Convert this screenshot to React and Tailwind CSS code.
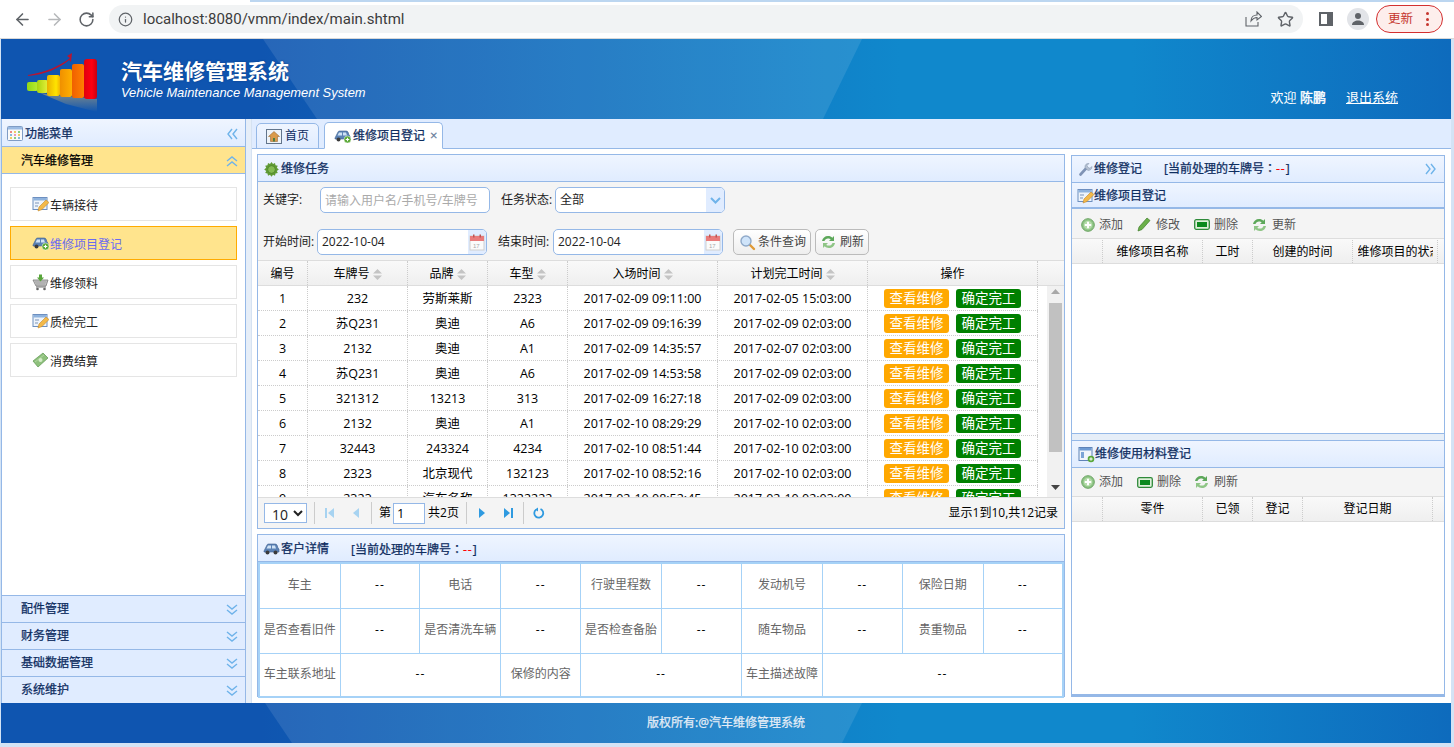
import React from "react";
import { ArrowLeft, ArrowRight, RotateCw, Info, Star } from "lucide-react";

const Dbl = ({ dir = "down", className = "" }) => {
  const d = {
    down: "M2 3l5 4 5-4M2 8l5 4 5-4",
    up: "M2 7l5-4 5 4M2 12l5-4 5 4",
    left: "M7 2L3 7l4 5M12 2L8 7l4 5",
    right: "M2 2l4 5-4 5M7 2l4 5-4 5",
  }[dir];
  return (
    <svg width="14" height="14" viewBox="0 0 14 14" className={className}>
      <path d={d} fill="none" stroke="#6fb3ea" strokeWidth="1.4" />
    </svg>
  );
};

const CarIcon = ({ plus = true }) => (
  <svg width="18" height="16" viewBox="0 0 18 16" className="shrink-0">
    <path d="M1 10l1-2 2-4c.5-1 1-1 2-1h6c1 0 1.500.3 2 1l1 3 1 1v3H1z" fill="#5b82b5" stroke="#3f5f8d" strokeWidth=".6" />
    <path d="M5 4.500h3v3H3.500zM9 4.500h3l1 3H9z" fill="#cfe2f5" />
    <circle cx="4.500" cy="11.500" r="2" fill="#3b3b3b" />
    <circle cx="12.500" cy="11.500" r="2" fill="#3b3b3b" />
    {plus && <circle cx="13.500" cy="11.500" r="3.500" fill="#55a630" stroke="#fff" strokeWidth=".5" />}
    {plus && <path d="M11.700 11.500h3.600M13.500 9.700v3.600" stroke="#fff" strokeWidth="1.200" />}
  </svg>
);

const FormPen = () => (
  <svg width="17" height="16" viewBox="0 0 17 16" className="shrink-0">
    <rect x="1" y="1.500" width="14" height="12" fill="#eef4fb" stroke="#6d8fc0" />
    <rect x="1.500" y="2" width="13" height="2.500" fill="#8fb3de" />
    <path d="M3 7h4M3 10h3" stroke="#7a93b8" />
    <path d="M6 15l1-4 7-7 3 2.500-7 7z" fill="#f3b94a" stroke="#c58a2a" strokeWidth=".6" />
  </svg>
);

const Cart = () => (
  <svg width="17" height="17" viewBox="0 0 17 17" className="shrink-0">
    <path d="M1 6h15l-2 6H4z" fill="#c9c9c9" stroke="#777" strokeWidth=".8" />
    <path d="M3 8h11.500M4 10h9.500" stroke="#888" strokeWidth=".7" />
    <path d="M4 13h10" stroke="#777" />
    <circle cx="5.500" cy="15" r="1.300" fill="#666" />
    <circle cx="12.500" cy="15" r="1.300" fill="#666" />
    <path d="M7 .5h3v3h2L8.500 7.500 5 3.500h2z" fill="#58a53a" />
  </svg>
);

const Money = () => (
  <svg width="17" height="16" viewBox="0 0 17 16" className="shrink-0">
    <path d="M1 9L11 1l5 5-10 9z" fill="#8ec07c" stroke="#5d9650" strokeWidth=".7" />
    <circle cx="8.500" cy="8" r="2" fill="#d5ecc9" />
    <path d="M3 10L12 3" stroke="#c5e3b7" strokeWidth=".6" />
  </svg>
);

const Home = () => (
  <svg width="16" height="15" viewBox="0 0 16 15" className="shrink-0">
    <rect x=".5" y=".5" width="15" height="14" fill="#eef3f8" stroke="#62758c" />
    <path d="M8 2.500L2.500 7.500h2v5h7v-5h2z" fill="#d99a4a" stroke="#8e5c25" strokeWidth=".5" />
    <rect x="7" y="9" width="2" height="3.500" fill="#4f7e3f" />
  </svg>
);

const Bug = () => (
  <svg width="17" height="17" viewBox="0 0 17 17" className="shrink-0">
    <path d="M8.500 1l1.500 2 2-1 .5 2.300 2.300.5-1 2 2 1.700-2 1.500 1 2-2.300.5-.5 2.300-2-1-1.500 2-1.500-2-2 1-.5-2.300-2.300-.5 1-2-2-1.500 2-1.700-1-2 2.300-.5.500-2.300 2 1z" fill="#5f9a34" />
    <ellipse cx="8.500" cy="8.500" rx="3.800" ry="3.800" fill="#84bb52" stroke="#3f7722" strokeWidth=".6" />
  </svg>
);

const Wrench = () => (
  <svg width="14" height="14" viewBox="0 0 14 14" className="shrink-0">
    <path d="M1.500 12.500l5.500-6" stroke="#7f93b5" strokeWidth="2.600" strokeLinecap="round" />
    <path d="M6 5.500c-.5-2.500 1.500-4.500 4-4l-2 2 1 2 2 .8 1.800-1.800c.4 2.500-2 4.500-4.300 3.700z" fill="#b6c2d3" stroke="#7f8ea6" strokeWidth=".5" />
  </svg>
);

const FormAdd = () => (
  <svg width="17" height="17" viewBox="0 0 17 17" className="shrink-0">
    <rect x="1" y="1.500" width="13" height="13" fill="#f0f5fb" stroke="#5f83b8" />
    <rect x="1.500" y="2" width="12" height="2.500" fill="#6e9bd4" />
    <rect x="3" y="6" width="3" height="6" fill="#7ba4d6" />
    <circle cx="13" cy="13" r="3.300" fill="#5aa83c" />
    <path d="M11.300 13h3.400M13 11.300v3.400" stroke="#fff" />
  </svg>
);

const Grid = () => (
  <svg width="16" height="15" viewBox="0 0 16 15" className="shrink-0">
    <rect x=".5" y=".5" width="15" height="14" rx="1" fill="#fafafa" stroke="#7f9cc5" />
    <rect x="1" y="1" width="14" height="2.500" fill="#9cbce4" />
    <path d="M3 5h2v2H3z" fill="#e88" /><path d="M7 5h2v2H7z" fill="#ec6" /><path d="M11 5h2v2h-2z" fill="#8c8" />
    <path d="M3 8h2v2H3z" fill="#8bd" /><path d="M7 8h2v2H7z" fill="#e9b" /><path d="M11 8h2v2h-2z" fill="#ec6" />
    <path d="M3 11h2v2H3z" fill="#ec6" /><path d="M7 11h2v2H7z" fill="#8c8" /><path d="M11 11h2v2h-2z" fill="#8bd" />
  </svg>
);

const Calendar = () => (
  <svg width="16" height="17" viewBox="0 0 16 17">
    <rect x="1" y="2" width="14" height="14" fill="#fbfbfb" stroke="#cfcfcf" />
    <rect x="1" y="2" width="14" height="5" fill="#e97a7a" />
    <rect x="4" y=".5" width="1.500" height="3" fill="#b55" />
    <rect x="10.500" y=".5" width="1.500" height="3" fill="#b55" />
    <text x="4" y="14" fontSize="6" fill="#aaa" fontFamily="Liberation Sans">17</text>
  </svg>
);

const Search = () => (
  <svg width="17" height="17" viewBox="0 0 17 17" className="shrink-0">
    <path d="M10 10l5 5" stroke="#e09a35" strokeWidth="2.400" strokeLinecap="round" />
    <circle cx="7" cy="7" r="5" fill="#cfe4fa" stroke="#8fa9c9" strokeWidth="1.400" />
  </svg>
);

const Refresh = () => (
  <svg width="17" height="16" viewBox="0 0 17 16" className="shrink-0">
    <path d="M2 7c.5-3 3-5 6-5 2 0 3.300.7 4.300 1.700L14 2v5H9l1.700-1.700C10 4.600 9.200 4.400 8 4.400 6.300 4.400 5 5.400 4.500 7z" fill="#5da85a" />
    <path d="M15 9c-.5 3-3 5-6 5-2 0-3.300-.7-4.300-1.700L3 14V9h5l-1.700 1.700c.7.7 1.500.9 2.700.9 1.700 0 3-1 3.500-2.600z" fill="#8fc586" />
  </svg>
);

const AddIcon = () => (
  <svg width="14" height="14" viewBox="0 0 14 14" className="shrink-0">
    <circle cx="7" cy="7" r="6.300" fill="#8fc586" stroke="#6ba362" />
    <circle cx="7" cy="7" r="4.300" fill="#b5dcaa" />
    <path d="M3.800 7h6.400M7 3.800v6.400" stroke="#fff" strokeWidth="2" />
  </svg>
);

const Pencil = () => (
  <svg width="15" height="15" viewBox="0 0 15 15" className="shrink-0">
    <path d="M1 14l1-4 8-9 3 2.500-8 9z" fill="#6bb04a" stroke="#3f7d2a" strokeWidth=".7" />
  </svg>
);

const Minus = () => (
  <svg width="16" height="11" viewBox="0 0 16 11" className="shrink-0">
    <rect x=".7" y=".7" width="14.600" height="9.600" rx="1.500" fill="#dff0da" stroke="#2f8a3a" strokeWidth="1.300" />
    <rect x="3" y="3" width="10" height="5" fill="#0b8a1e" />
  </svg>
);

const Logo = () => (
  <svg width="72" height="62" viewBox="0 0 72 62" className="shrink-0">
    <defs>
      <linearGradient id="b1" x1="0" x2="1"><stop offset="0" stopColor="#8fd816" /><stop offset="1" stopColor="#b8ec30" /></linearGradient>
      <linearGradient id="b2" x1="0" x2="1"><stop offset="0" stopColor="#a8d410" /><stop offset="1" stopColor="#e6f03a" /></linearGradient>
      <linearGradient id="b3" x1="0" x2="1"><stop offset="0" stopColor="#e8b000" /><stop offset=".7" stopColor="#ffe400" /><stop offset="1" stopColor="#f4b400" /></linearGradient>
      <linearGradient id="b4" x1="0" x2="1"><stop offset="0" stopColor="#f09000" /><stop offset="1" stopColor="#ffb000" /></linearGradient>
      <linearGradient id="b5" x1="0" x2="1"><stop offset="0" stopColor="#f06000" /><stop offset="1" stopColor="#ff8000" /></linearGradient>
      <linearGradient id="b6" x1="0" x2="1"><stop offset="0" stopColor="#e00010" /><stop offset=".6" stopColor="#ff0010" /><stop offset="1" stopColor="#c80010" /></linearGradient>
      <linearGradient id="rf" x1="0" x2="0" y1="0" y2="1"><stop offset="0" stopColor="#ffc860" stopOpacity=".45" /><stop offset="1" stopColor="#ffc860" stopOpacity="0" /></linearGradient>
    </defs>
    <path d="M2 23C20 20 34 14 44 6l-3-2 5-3-1 9-2-2C34 16 18 23 2 24z" fill="#b81530" />
    <path d="M14 41l20 3 24 2 13 1v13L40 52z" fill="url(#rf)" />
    <rect x="1" y="30" width="11" height="9" rx="2" fill="url(#b1)" />
    <rect x="11" y="28" width="11" height="13" rx="2" fill="url(#b2)" />
    <rect x="21" y="23" width="13" height="21" rx="2" fill="url(#b3)" />
    <rect x="34" y="17" width="12" height="28" rx="2" fill="url(#b4)" />
    <rect x="46" y="12" width="12" height="34" rx="2" fill="url(#b5)" />
    <rect x="58" y="7" width="13" height="40" rx="3" fill="url(#b6)" />
  </svg>
);

const PagerIcon = ({ d, color = "#2f9ae0" }) => (
  <svg width="12" height="14" viewBox="0 0 12 14" className="shrink-0">
    <path d={d} fill={color} />
  </svg>
);

const Panel = ({ children, className = "" }) => (
  <div className={`h-[27px] shrink-0 flex items-center bg-[linear-gradient(180deg,#eff5ff,#e0ecff)] border-b border-[#95b8e7] text-[#0e2d5f] [-webkit-text-stroke:0.25px] ${className}`}>
    {children}
  </div>
);

const SortArrows = () => (
  <svg width="9" height="11" viewBox="0 0 9 11" className="ml-[3px] shrink-0">
    <path d="M4.500 0L9 4.500H0zM4.500 11L0 6.500h9z" fill="#c4c4c4" />
  </svg>
);

const columns = [
  ["编号", "w-[50px]", false],
  ["车牌号", "w-[100px]", true],
  ["品牌", "w-[80px]", true],
  ["车型", "w-[80px]", true],
  ["入场时间", "w-[150px]", true],
  ["计划完工时间", "w-[150px]", true],
  ["操作", "w-[170px]", false],
];

const rows = [
  ["1", "232", "劳斯莱斯", "2323", "2017-02-09 09:11:00", "2017-02-05 15:03:00"],
  ["2", "苏Q231", "奥迪", "A6", "2017-02-09 09:16:39", "2017-02-09 02:03:00"],
  ["3", "2132", "奥迪", "A1", "2017-02-09 14:35:57", "2017-02-07 02:03:00"],
  ["4", "苏Q231", "奥迪", "A6", "2017-02-09 14:53:58", "2017-02-09 02:03:00"],
  ["5", "321312", "13213", "313", "2017-02-09 16:27:18", "2017-02-09 02:03:00"],
  ["6", "2132", "奥迪", "A1", "2017-02-10 08:29:29", "2017-02-10 02:03:00"],
  ["7", "32443", "243324", "4234", "2017-02-10 08:51:44", "2017-02-10 02:03:00"],
  ["8", "2323", "北京现代", "132123", "2017-02-10 08:52:16", "2017-02-10 02:03:00"],
  ["9", "2323", "汽车名称", "1322222", "2017-02-10 08:52:45", "2017-02-10 02:03:00"],
];

const menu = [
  ["车辆接待", <FormPen />],
  ["维修项目登记", <CarIcon />, true],
  ["维修领料", <Cart />],
  ["质检完工", <FormPen />],
  ["消费结算", <Money />],
];

const GridHeader = ({ cols, textPad = "" }) => (
  <div className={`h-[26px] shrink-0 flex bg-[linear-gradient(180deg,#f9f9f9,#efefef)] border-y border-[#dddddd] text-[#000] ${textPad}`}>
    {cols.map(([t, w, clip], i) => (
      <div key={i} className={`${w} shrink-0 flex items-center justify-center overflow-hidden whitespace-nowrap border-r border-dotted border-[#cccccc]`}>
        {clip ? <span className="w-[75px] overflow-hidden">{t}</span> : t}
      </div>
    ))}
  </div>
);

const Tool = ({ icon, label, className = "" }) => (
  <div className={`flex items-center gap-[4px] text-[#555] ${className}`}>{icon}<span>{label}</span></div>
);

const Label = ({ children }) => <td className="w-[81px] pb-[2px] border border-[#a6d2f7] text-center text-[#666]">{children}</td>;
const Val = ({ span = 1 }) => <td colSpan={span} className="pb-[2px] border border-[#a6d2f7] text-center text-black tracking-[1px]">--</td>;

const Plate = () => (
  <span className="ml-[22px]">[当前处理的车牌号<span className="font-['Noto_Sans_CJK_TC',sans-serif]">：</span><span className="text-[#ff0000] tracking-[1px]">--</span>]</span>
);

const headerBg = "bg-[linear-gradient(90deg,#0f55b0_0%,#0f55b0_18%,#1088cc_62%,#1088cc_78%,#0e6bbd_100%)]";

export default function App() {
  return (
    <div className="relative w-[1454px] h-[747px] overflow-hidden bg-[#d3e3f5] text-[12px] text-[#222] font-['Open_Sans','Noto_Sans_CJK_SC',sans-serif]">
      {/* browser chrome */}
      <div className="relative h-[39px] bg-white flex items-center border-b border-[#d8d8d8]">
        <div className="absolute left-[250px] right-0 top-0 h-[2px] bg-[#bcd6f0]" />
        <ArrowLeft size={19} color="#5f6368" strokeWidth={2} className="ml-[13px]" />
        <ArrowRight size={19} color="#b6b8ba" strokeWidth={2} className="ml-[13px]" />
        <RotateCw size={17} color="#5f6368" strokeWidth={2.200} className="ml-[14px]" />
        <div className="ml-[14px] w-[1194px] h-[28px] rounded-full bg-[#f1f3f4] flex items-center">
          <Info size={15} color="#5f6368" strokeWidth={2} className="ml-[9px]" />
          <span className="ml-[10px] text-[15px] text-[#3c3c3c] font-['Roboto',sans-serif]">localhost:8080/vmm/index/main.shtml</span>
          <div className="ml-auto flex items-center mr-[9px] gap-[15px]">
            <svg width="17" height="16" viewBox="0 0 17 16"><path d="M1 6v9h12v-4M6 10c0-4 3-6 6-6V1l4.500 4.500L12 9V6.500C9.500 6.500 7.500 8 6 10z" fill="none" stroke="#5f6368" strokeWidth="1.100" /></svg>
            <Star size={17} color="#5f6368" strokeWidth={2} />
          </div>
        </div>
        <div className="ml-[16px] w-[14px] h-[14px] border-2 border-[#5f6368] border-r-[6px]" />
        <div className="ml-[14px] w-[22px] h-[22px] rounded-full bg-[#e2e4e8] flex items-center justify-center">
          <svg width="14" height="14" viewBox="0 0 14 14"><circle cx="7" cy="4" r="3" fill="#5f6368" /><path d="M1 13c0-3 3-4.500 6-4.500s6 1.500 6 4.500z" fill="#5f6368" /></svg>
        </div>
        <div className="ml-[7px] w-[67px] h-[28px] rounded-full border border-[#d32f2f] bg-[#fdeeec] flex items-center text-[#c5352e] text-[12.500px] pl-[11px]">
          更新
          <span className="ml-[13px] flex flex-col gap-[2.500px]">
            <span className="w-[3px] h-[3px] rounded-full bg-[#c5352e]" />
            <span className="w-[3px] h-[3px] rounded-full bg-[#c5352e]" />
            <span className="w-[3px] h-[3px] rounded-full bg-[#c5352e]" />
          </span>
        </div>
      </div>

      {/* app */}
      <div className="ml-px w-[1450px] bg-white">
        <div className={`relative h-[80px] flex ${headerBg}`}>
          <div className="absolute inset-0 bg-white/10 [clip-path:polygon(262px_0,861px_0,822px_100%,316px_100%)]" />
          <div className="relative flex w-full">
            <div className="ml-[25px] mt-[13px]"><Logo /></div>
            <div className="ml-[23px] mt-[18px] text-white">
              <div className="text-[21px] leading-[28px] font-bold [text-shadow:0_0_2px_#0a3a80]">汽车维修管理系统</div>
              <div className="text-[12.900px] leading-[16px] italic whitespace-nowrap font-['Liberation_Sans',sans-serif]">Vehicle Maintenance Management System</div>
            </div>
            <div className="ml-auto mr-[53px] mt-[49px] flex text-white text-[13px] leading-[18px]">
              <span>欢迎 <span className="[-webkit-text-stroke:0.4px]">陈鹏</span></span>
              <span className="ml-[20px] underline">退出系统</span>
            </div>
          </div>
        </div>

        <div className="h-[584px] flex">
          {/* sidebar */}
          <div className="w-[245px] shrink-0 border-x border-[#95b8e7] flex flex-col bg-white">
            <div className="h-[28px] shrink-0 flex items-center pl-[5px] pr-[6px] pt-[2px] bg-[linear-gradient(180deg,#eff5ff,#e0ecff)] border-b border-[#95b8e7] text-[#0e2d5f] [-webkit-text-stroke:0.25px]">
              <Grid /><span className="ml-[2px]">功能菜单</span><Dbl dir="left" className="ml-auto" />
            </div>
            <div className="h-[27px] shrink-0 flex items-center pl-[19px] pr-[6px] pt-[2px] bg-[#ffe48d] border-b border-[#95b8e7] text-black [-webkit-text-stroke:0.25px]">
              汽车维修管理<Dbl dir="up" className="ml-auto" />
            </div>
            <div className="flex-1 px-[8px] pt-[13px] flex flex-col gap-[5px]">
              {menu.map(([t, ic, active], i) => (
                <div key={i} className={`h-[34px] flex items-center pl-[21px] border ${active ? "bg-[#ffe48d] border-[#ffab00] text-[#6a6af0]" : "border-[#e5e5e5] text-[#222]"}`}>
                  <span className="w-[18px] flex">{ic}</span><span className="pt-[3px]">{t}</span>
                </div>
              ))}
            </div>
            {["配件管理", "财务管理", "基础数据管理", "系统维护"].map((t) => (
              <div key={t} className="h-[27px] shrink-0 flex items-center pl-[19px] pr-[6px] bg-[#e0ecff] border-t border-[#95b8e7] text-[#0e2d5f] [-webkit-text-stroke:0.25px]">
                {t}<Dbl className="ml-auto" />
              </div>
            ))}
          </div>

          <div className="w-[6px] shrink-0 bg-[#e6eef8] border-r border-[#d5e2f2]" />

          {/* main */}
          <div className="flex-1 min-w-0 flex flex-col">
            <div className="h-[30px] shrink-0 bg-[#e0ecff] border-b border-[#95b8e7] flex items-end pl-[4px] gap-[5px]">
              <div className="w-[63px] h-[26px] mb-[-1px] rounded-t-[5px] border border-[#95b8e7] bg-[linear-gradient(180deg,#eff5ff,#e0ecff)] flex items-center pl-[9px] gap-[3px] text-[#0e2d5f]">
                <Home />首页
              </div>
              <div className="w-[119px] h-[27px] mb-[-1px] rounded-t-[5px] border border-[#95b8e7] border-b-white bg-white flex items-center pl-[9px] gap-[1px] text-[#0e2d5f] [-webkit-text-stroke:0.25px]">
                <CarIcon /><span>维修项目登记</span><span className="ml-[4px] text-[#667a99] text-[13px] leading-none">×</span>
              </div>
            </div>

            <div className="flex-1 flex px-[5px] pt-[5px] gap-[6px] min-h-0">
              {/* left column */}
              <div className="w-[808px] shrink-0 flex flex-col gap-[5px]">
                {/* task panel */}
                <div className="h-[375px] shrink-0 border border-[#95b8e7] flex flex-col bg-[#f4f4f4]">
                  <Panel className="pl-[5px] pt-[2px]"><Bug /><span className="ml-[1px]">维修任务</span></Panel>
                  <div className="h-[78px] shrink-0 flex flex-col">
                    <div className="h-[26px] mt-[5px] flex items-center pl-[5px]">
                      <span className="w-[57px]">关键字:</span>
                      <input placeholder="请输入用户名/手机号/车牌号" className="w-[170px] h-[26px] px-[4px] rounded-[5px] border border-[#95b8e7] bg-white outline-none placeholder:text-[#aaaaaa]" />
                      <span className="ml-[11px] w-[54px]">任务状态:</span>
                      <div className="w-[170px] h-[26px] rounded-[5px] border border-[#95b8e7] bg-white flex items-center pl-[4px] overflow-hidden">
                        全部
                        <span className="ml-auto w-[18px] h-full bg-[#e0ecff] flex items-center justify-center">
                          <svg width="11" height="7" viewBox="0 0 11 7"><path d="M1 1l4.500 4.500L10 1" fill="none" stroke="#6fb3ea" strokeWidth="2" /></svg>
                        </span>
                      </div>
                    </div>
                    <div className="h-[26px] mt-[16px] flex items-center pl-[5px]">
                      <span className="w-[54px] whitespace-nowrap">开始时间:</span>
                      <div className="w-[170px] h-[26px] rounded-[5px] border border-[#95b8e7] bg-white flex items-center pl-[4px] overflow-hidden">
                        2022-10-04
                        <span className="ml-auto w-[18px] h-full bg-[#e0ecff] flex items-center justify-center"><Calendar /></span>
                      </div>
                      <span className="ml-[11px] w-[55px] whitespace-nowrap">结束时间:</span>
                      <div className="w-[170px] h-[26px] rounded-[5px] border border-[#95b8e7] bg-white flex items-center pl-[4px] overflow-hidden">
                        2022-10-04
                        <span className="ml-auto w-[18px] h-full bg-[#e0ecff] flex items-center justify-center"><Calendar /></span>
                      </div>
                      <div className="ml-[10px] w-[78px] h-[26px] rounded-[5px] border border-[#bbbbbb] bg-[linear-gradient(180deg,#ffffff,#eeeeee)] flex items-center pl-[5px] gap-[2px] text-[#444]"><Search />条件查询</div>
                      <div className="ml-[4px] w-[54px] h-[26px] rounded-[5px] border border-[#bbbbbb] bg-[linear-gradient(180deg,#ffffff,#eeeeee)] flex items-center pl-[4px] gap-[3px] text-[#444]"><Refresh />刷新</div>
                    </div>
                  </div>
                  <div className="flex bg-[linear-gradient(180deg,#f9f9f9,#efefef)] h-[26px] shrink-0 border-y border-[#dddddd] text-black">
                    {columns.map(([t, w, s], i) => (
                      <div key={i} className={`${w} shrink-0 flex items-center justify-center pt-[2px] border-r border-dotted border-[#cccccc]`}>
                        {t}{s && <SortArrows />}
                      </div>
                    ))}
                  </div>
                  <div className="h-[212px] shrink-0 flex overflow-hidden bg-white border-b border-[#dddddd] text-black">
                    <div className="w-[789px] shrink-0">
                      {rows.map((r, i) => (
                        <div key={i} className="h-[25px] flex border-b border-dotted border-[#cccccc] text-[12.500px] w-[780px]">
                          {r.map((c, j) => (
                            <div key={j} className={`${columns[j][1]} shrink-0 flex items-center justify-center pt-[2px] whitespace-nowrap border-r border-dotted border-[#cccccc]`}>{c}</div>
                          ))}
                          <div className="w-[170px] shrink-0 flex items-center pl-[16px] gap-[7px] border-r border-dotted border-[#cccccc] text-[13.500px] text-white">
                            <span className="w-[65px] h-[19px] rounded-[3px] pt-px bg-[#ffa800] flex items-center justify-center">查看维修</span>
                            <span className="w-[65px] h-[19px] rounded-[3px] pt-px bg-[#008000] flex items-center justify-center">确定完工</span>
                          </div>
                        </div>
                      ))}
                    </div>
                    <div className="w-[17px] shrink-0 bg-[#f1f1f1] flex flex-col items-center">
                      <svg width="9" height="5" viewBox="0 0 9 5" className="mt-[3px]"><path d="M4.500 0L9 5H0z" fill="#a8a8a8" /></svg>
                      <div className="w-[13px] h-[149px] mt-[9px] bg-[#c1c1c1]" />
                      <svg width="9" height="5" viewBox="0 0 9 5" className="mt-auto mb-[7px]"><path d="M4.500 5L9 0H0z" fill="#444" /></svg>
                    </div>
                  </div>
                  <div className="flex-1 flex items-center pl-[6px] pr-[6px] text-black">
                    <select className="w-[43px] h-[20px] border border-[#95b8e7] bg-white text-[14px] pl-[3px] text-[#222]"><option>10</option></select>
                    <span className="ml-[7px] h-[22px] w-px bg-[#cccccc]" />
                    <span className="ml-[9px] flex"><PagerIcon d="M1 2h2v10H1zM10 2v10L4 7z" color="#a7d3f1" /></span>
                    <span className="ml-[14px] flex"><PagerIcon d="M9 2v10L3 7z" color="#a7d3f1" /></span>
                    <span className="ml-[9px] h-[22px] w-px bg-[#cccccc]" />
                    <span className="ml-[7px]">第</span>
                    <input readOnly value="1" className="ml-[2px] w-[32px] h-[21px] border border-[#95b8e7] bg-white pl-[3px] text-[13px] outline-none" />
                    <span className="ml-[3px]">共2页</span>
                    <span className="ml-[7px] h-[22px] w-px bg-[#cccccc]" />
                    <span className="ml-[9px] flex"><PagerIcon d="M3 2v10l6-5z" /></span>
                    <span className="ml-[14px] flex"><PagerIcon d="M2 2v10l6-5zM9 2h2v10H9z" /></span>
                    <span className="ml-[9px] h-[22px] w-px bg-[#cccccc]" />
                    <span className="ml-[9px] flex">
                      <svg width="12" height="12" viewBox="0 0 12 12"><path d="M7.500 2A4.500 4.500 0 1 1 3 2.600" fill="none" stroke="#2f9ae0" strokeWidth="1.800" /><path d="M5 .5v4L2 2.500z" fill="#2f9ae0" /></svg>
                    </span>
                    <span className="ml-auto whitespace-nowrap">显示1到10,共12记录</span>
                  </div>
                </div>

                {/* customer panel */}
                <div className="h-[163px] shrink-0 border border-[#95b8e7] flex flex-col">
                  <Panel className="pl-[5px] pt-[2px]"><CarIcon plus={false} /><span>客户详情</span><Plate /></Panel>
                  <table className="w-full flex-1 border-collapse table-fixed border-2 border-[#a6d2f7] h-[134px]">
                    <tbody>
                      <tr className="h-[45px]"><Label>车主</Label><Val /><Label>电话</Label><Val /><Label>行驶里程数</Label><Val /><Label>发动机号</Label><Val /><Label>保险日期</Label><Val /></tr>
                      <tr className="h-[45px]"><Label>是否查看旧件</Label><Val /><Label>是否清洗车辆</Label><Val /><Label>是否检查备胎</Label><Val /><Label>随车物品</Label><Val /><Label>贵重物品</Label><Val /></tr>
                      <tr className="h-[44px]"><Label>车主联系地址</Label><Val span={2} /><Label>保修的内容</Label><Val span={2} /><Label>车主描述故障</Label><Val span={3} /></tr>
                    </tbody>
                  </table>
                </div>
              </div>

              {/* right column */}
              <div className="w-[374px] h-[542px] mt-px shrink-0 border border-[#95b8e7] border-b-[3px] flex flex-col bg-white">
                <Panel className="pl-[7px] pr-[6px] pb-[1px]"><Wrench /><span className="ml-[1px]">维修登记</span><Plate /><Dbl dir="right" className="ml-auto" /></Panel>
                <div className="h-[26px] shrink-0 flex items-center pl-[5px] pt-[2px] bg-[linear-gradient(180deg,#eff5ff,#e0ecff)] border-b-2 border-[#95b8e7] text-[#0e2d5f] [-webkit-text-stroke:0.25px]"><FormPen /><span>维修项目登记</span></div>
                <div className="h-[29px] shrink-0 bg-[#f4f4f4] flex items-center pl-[9px] pt-[2px]">
                  <Tool icon={<AddIcon />} label="添加" />
                  <Tool icon={<Pencil />} label="修改" className="ml-[14px]" />
                  <Tool icon={<Minus />} label="删除" className="ml-[14px]" />
                  <Tool icon={<Refresh />} label="更新" className="ml-[13px]" />
                </div>
                <GridHeader textPad="pt-[1px]" cols={[["", "w-[31px]"], ["维修项目名称", "w-[100px]"], ["工时", "w-[50px]"], ["创建的时间", "w-[100px]"], ["维修项目的状态", "w-[85px]", true]]} />
                <div className="h-[169px] shrink-0 bg-white" />
                <div className="h-[8px] shrink-0 bg-[#e6eef8] border-y border-[#95b8e7]" />
                <div className="h-[27px] shrink-0 flex items-center pl-[6px] bg-[linear-gradient(180deg,#eff5ff,#e0ecff)] border-b border-[#95b8e7] text-[#0e2d5f] [-webkit-text-stroke:0.25px]"><FormAdd /><span>维修使用材料登记</span></div>
                <div className="h-[28px] shrink-0 bg-[#f4f4f4] flex items-center pl-[9px]">
                  <Tool icon={<AddIcon />} label="添加" />
                  <Tool icon={<Minus />} label="删除" className="ml-[14px]" />
                  <Tool icon={<Refresh />} label="刷新" className="ml-[12px]" />
                </div>
                <GridHeader cols={[["", "w-[31px]"], ["零件", "w-[100px]"], ["已领", "w-[50px]"], ["登记", "w-[50px]"], ["登记日期", "w-[130px]"]]} />
                <div className="flex-1 bg-white" />
              </div>
            </div>
          </div>
        </div>

        <div className={`relative h-[40px] flex items-center justify-center ${headerBg}`}>
          <div className="absolute inset-0 bg-white/10 [clip-path:polygon(264px_0,861px_0,841px_100%,291px_100%)]" />
          <span className="relative text-[#e4edf7] [-webkit-text-stroke:0.25px]">版权所有:@汽车维修管理系统</span>
        </div>
      </div>
    </div>
  );
}
